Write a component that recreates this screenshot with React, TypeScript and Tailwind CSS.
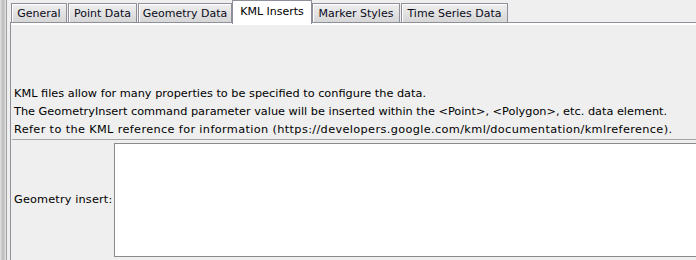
import React from "react";

const tabs = [
  { label: "General", w: "w-[56px]" },
  { label: "Point Data", w: "w-[69px]" },
  { label: "Geometry Data", w: "w-[94px]" },
  { label: "KML Inserts", w: "w-[80px]", selected: true },
  { label: "Marker Styles", w: "w-[88px]" },
  { label: "Time Series Data", w: "w-[107px]" },
];

export default function App() {
  return (
    <div
      className="w-[696px] h-[260px] overflow-hidden bg-[#efefef] flex text-[11px] text-black"
      style={{ fontFamily: '"DejaVu Sans", Tahoma, sans-serif' }}
    >
      {/* left splitter area */}
      <div className="w-[6px] h-full bg-gradient-to-r from-[#e4e4e4] via-[#b9b9b9] to-[#e6e6e6]" />
      <div className="w-[1px] h-full bg-[#a3a3a3]" />
      <div className="w-[3px] h-full" />
      <div className="flex-1 flex flex-col min-w-0">
        {/* tab strip */}
        <div className="h-[22px] flex items-end pl-[1px] gap-[1px]">
          {tabs.map((t) =>
            t.selected ? (
              <div
                key={t.label}
                className={`${t.w} h-[24px] -mb-[2px] relative z-10 bg-white border border-b-0 border-[#8e8f98] flex items-start justify-center pt-[4px] -mx-[1px]`}
              >
                <span className="leading-[13px]">{t.label}</span>
              </div>
            ) : (
              <div
                key={t.label}
                className={`${t.w} h-[19px] bg-gradient-to-b from-[#efefef] to-[#d6d6d6] border border-b-0 border-[#8e8f98] shadow-[inset_1px_1px_0_#ffffff] flex items-center justify-center pt-[1px]`}
              >
                <span className="leading-[13px] text-[#0a0a20]">{t.label}</span>
              </div>
            )
          )}
        </div>
        {/* tab panel */}
        <div className="flex-1 border-t border-l border-[#8e8f98] flex flex-col min-h-0">
          <div className="h-[2px] bg-white" />
          <div className="flex-1 flex flex-col pl-[3px] pt-[60px] text-[11.3px]">
            <div className="leading-[18px] whitespace-nowrap">
              <div>KML files allow for many properties to be specified to configure the data.</div>
              <div>
                The GeometryInsert command parameter value will be inserted within the &lt;Point&gt;, &lt;Polygon&gt;, etc. data element.
              </div>
              <div className="tracking-[0.36px]">
                Refer to the KML reference for information (https://developers.google.com/kml/documentation/kmlreference).
              </div>
            </div>
            <div className="h-[1px] bg-[#a5a5a5] -ml-[2px]" />
            <div className="flex items-center mt-[3px]">
              <div className="w-[100px] shrink-0 whitespace-nowrap tracking-[0.15px]">Geometry insert:</div>
              <div className="w-[600px] h-[114px] shrink-0 bg-white border border-[#8a8a8a]" />
            </div>
          </div>
        </div>
      </div>
    </div>
  );
}
